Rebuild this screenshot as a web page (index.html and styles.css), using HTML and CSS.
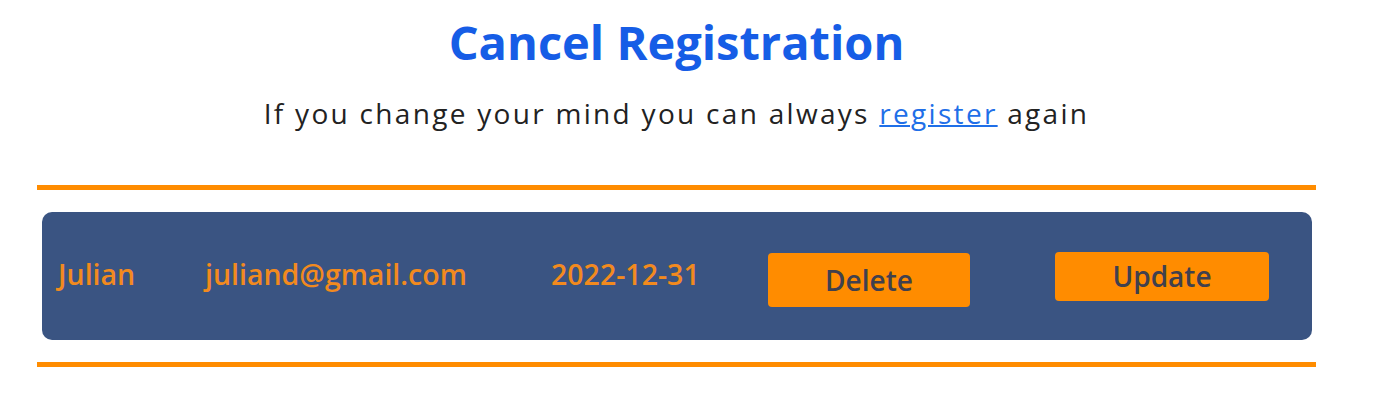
FILE: index.html
```html
<!DOCTYPE html>
<html lang="en">
<head>
<meta charset="utf-8">
<title>Cancel Registration</title>
<link rel="stylesheet" href="styles.css">
</head>
<body>
<main class="page">
  <h1 class="title">Cancel Registration</h1>
  <p class="subtitle">If you change your mind you can always <a href="#" class="link">register</a> again</p>
  <div class="rule rule-top"></div>
  <div class="card">
    <span class="cell">Julian</span>
    <span class="cell">juliand@gmail.com</span>
    <span class="cell">2022-12-31</span>
    <button class="btn btn-delete">Delete</button>
    <button class="btn btn-update">Update</button>
  </div>
  <div class="rule"></div>
</main>
</body>
</html>
```

FILE: styles.css
```css
* { box-sizing: border-box; }
body {
  margin: 0;
  background: #ffffff;
  font-family: "Open Sans", "Noto Sans", sans-serif;
}
.page {
  width: 1279px;
  margin-left: 37px;
  padding-top: 10px;
}
.title {
  margin: 0;
  text-align: center;
  font-size: 47px;
  line-height: 64px;
  font-weight: 700;
  color: #165de6;
}
.subtitle {
  margin: 19px 0 0;
  text-align: center;
  font-size: 28px;
  line-height: 40px;
  letter-spacing: 2.3px;
  color: #222;
}
.link {
  color: #1f6fe8;
  text-decoration: underline;
  text-decoration-thickness: 2px;
}
.rule {
  height: 5px;
  background: #ff8c00;
}
.rule-top { margin-top: 52px; }
.card {
  margin: 22px 4px 22px 5px;
  height: 128px;
  background: #3a5482;
  border-radius: 10px;
  display: grid;
  grid-template-columns: 147px 346px 217px 287px 214px;
  align-items: center;
  padding-left: 16px;
}
.cell {
  font-size: 28.5px;
  font-weight: 600;
  color: #f28a1e;
  margin-bottom: 4px;
}
.btn {
  font-family: inherit;
  border: none;
  border-radius: 4px;
  background: #ff8c00;
  color: #40404e;
  font-size: 28px;
  font-weight: 600;
  padding: 0;
}
.btn-delete {
  width: 202px;
  height: 54px;
  margin-top: 8px;
}
.btn-update {
  width: 214px;
  height: 49px;
}
```
